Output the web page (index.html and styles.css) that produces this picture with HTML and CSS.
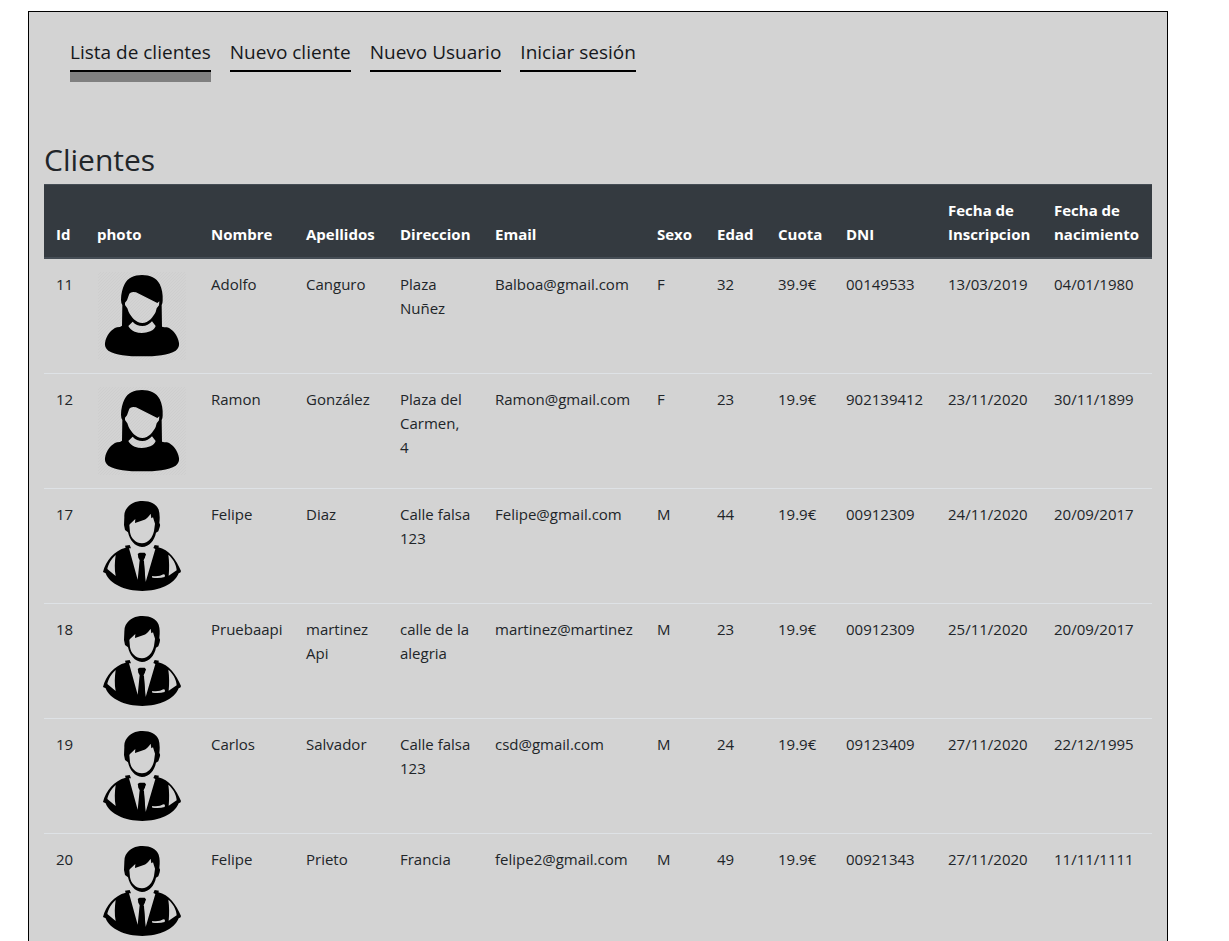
FILE: index.html
```
<!DOCTYPE html>
<html lang="es">
<head>
<meta charset="utf-8">
<title>Clientes</title>
<link rel="stylesheet" href="styles.css">
</head>
<body>
<svg class="sprite" aria-hidden="true">
  <defs>
    <pattern id="hatch" width="9" height="9" patternUnits="userSpaceOnUse">
      <path d="M-2 11L11 -2M-2 2L2 -2M7 11L11 7" stroke="#c8c8c8" stroke-width="1.5"/>
    </pattern>
  </defs>
  <symbol id="woman" viewBox="21 30 270 270">
    <rect x="24" y="30" width="264" height="264" fill="url(#hatch)"/>
    <path fill-rule="evenodd" d="M156 39C180 39 200 48 209 66C216 80 219 97 218 116Q218 123 215 129L216 194Q222 196 231 196C248 201 264 222 267 243Q269 257 257 266C236 279 198 283 156 283C114 283 76 279 55 266Q43 257 45 243C48 222 64 201 81 196Q91 196 96 191L97 129Q93 123 93 113C93 96 97 80 104 66C113 48 132 39 156 39Z
    M105 122L105 129L112 139L116 150C124 165 138 183 157 183C176 183 189 165 197 150L200 139L207 130L208 118L202 123L138 91Q124 87 118 95L111 115Z
    M115 192L128 179Q140 192 157 192Q174 192 186 178L197 192Q194 202 181 208Q157 217 134 209Q119 202 115 192Z"/>
  </symbol>
  <symbol id="man" viewBox="21 30 270 270" overflow="visible">
    <path fill-rule="evenodd" d="M107 54C119 34 137 27 158 27C181 27 200 36 206 53Q211 69 208 93Q212 97 209 106L205 118Q202 121 198 122C193 146 178 164 156 165C134 164 119 144 114 121L105 114L102 99L103 75Q102 64 107 54Z
    M118 99L120 121C123 140 138 154 156 154C175 154 188 136 192 117L195 95L189 76L184 79L182 65Q172 80 159 85L135 93L136 81L120 96Z"/>
    <path fill-rule="evenodd" d="M105 161L119 159L123 169L117 169L143 263L149 205L145 197Q143 185 149 183L164 183Q168 187 164 197L161 205L167 270L196 171L190 168L194 159L207 161L205 166C236 172 260 205 273 237Q273 242 266 244C253 277 207 297 157 297C106 297 58 276 47 244L39 240C47 207 73 175 107 167Z
    M77 189C65 199 54 218 52 231L77 252C73 233 74 209 77 189Z
    M235 188C238 208 238 231 236 251L260 235C259 215 247 198 235 188Z
    M186 252Q208 255 220 247L225 248L224 255Q208 260 187 257Z"/>
    <path d="M143 186L149 182L164 182L168 187L164 198L159 202L153 202L147 198ZM150 207L162 207L166 275L156 282L147 275Z"/>
  </symbol>
</svg>

<main class="container">
  <nav class="menu">
    <a class="menu-link active" href="#">Lista de clientes</a>
    <a class="menu-link" href="#">Nuevo cliente</a>
    <a class="menu-link" href="#">Nuevo Usuario</a>
    <a class="menu-link" href="#">Iniciar sesión</a>
  </nav>
  <h2 class="title">Clientes</h2>
  <table class="table">
    <colgroup>
      <col class="c-id"><col class="c-photo"><col class="c-name"><col class="c-surname"><col class="c-address"><col class="c-email">
      <col class="c-sex"><col class="c-age"><col class="c-fee"><col class="c-dni"><col class="c-joined"><col class="c-born">
    </colgroup>
    <thead>
      <tr><th>Id</th><th>photo</th><th>Nombre</th><th>Apellidos</th><th>Direccion</th><th>Email</th><th>Sexo</th><th>Edad</th><th>Cuota</th><th>DNI</th><th>Fecha de Inscripcion</th><th>Fecha de nacimiento</th></tr>
    </thead>
    <tbody>
      <tr><td>11</td><td><svg class="photo" role="img" aria-label="F"><use href="#woman"/></svg></td><td>Adolfo</td><td>Canguro</td><td>Plaza Nuñez</td><td>Balboa@gmail.com</td><td>F</td><td>32</td><td>39.9€</td><td>00149533</td><td>13/03/2019</td><td>04/01/1980</td></tr>
      <tr><td>12</td><td><svg class="photo" role="img" aria-label="F"><use href="#woman"/></svg></td><td>Ramon</td><td>González</td><td>Plaza del Carmen, 4</td><td>Ramon@gmail.com</td><td>F</td><td>23</td><td>19.9€</td><td>902139412</td><td>23/11/2020</td><td>30/11/1899</td></tr>
      <tr><td>17</td><td><svg class="photo" role="img" aria-label="M"><use href="#man"/></svg></td><td>Felipe</td><td>Diaz</td><td>Calle falsa 123</td><td>Felipe@gmail.com</td><td>M</td><td>44</td><td>19.9€</td><td>00912309</td><td>24/11/2020</td><td>20/09/2017</td></tr>
      <tr><td>18</td><td><svg class="photo" role="img" aria-label="M"><use href="#man"/></svg></td><td>Pruebaapi</td><td>martinez Api</td><td>calle de la alegria</td><td>martinez@martinez</td><td>M</td><td>23</td><td>19.9€</td><td>00912309</td><td>25/11/2020</td><td>20/09/2017</td></tr>
      <tr><td>19</td><td><svg class="photo" role="img" aria-label="M"><use href="#man"/></svg></td><td>Carlos</td><td>Salvador</td><td>Calle falsa 123</td><td>csd@gmail.com</td><td>M</td><td>24</td><td>19.9€</td><td>09123409</td><td>27/11/2020</td><td>22/12/1995</td></tr>
      <tr><td>20</td><td><svg class="photo" role="img" aria-label="M"><use href="#man"/></svg></td><td>Felipe</td><td>Prieto</td><td>Francia</td><td>felipe2@gmail.com</td><td>M</td><td>49</td><td>19.9€</td><td>00921343</td><td>27/11/2020</td><td>11/11/1111</td></tr>
    </tbody>
  </table>
</main>
</body>
</html>
```
FILE: styles.css
```
* {
  box-sizing: border-box;
}

body {
  margin: 0;
  background: #fff;
  color: #212529;
  font-family: "Segoe UI", "Open Sans", "Noto Sans", sans-serif;
  font-size: 15px;
  line-height: 24px;
}

.sprite {
  position: absolute;
  width: 0;
  height: 0;
}

.container {
  max-width: 1140px;
  margin: 11px 61px 0 28px;
  padding: 0 15px;
  border: 1px solid #000;
  background: #d3d3d3;
}

.menu {
  display: flex;
  align-items: flex-start;
  gap: 19px;
  padding: 25px 26px 59px;
}

.menu-link {
  padding-bottom: 3px;
  border-bottom: 2px solid #000;
  color: #16181b;
  font-size: 19px;
  line-height: 30px;
  text-decoration: none;
}

.menu-link.active {
  box-shadow: 0 10px 0 #808080;
  margin-bottom: 10px;
}

.title {
  margin: 0 0 5px;
  font-size: 30px;
  font-weight: 400;
  line-height: 38px;
}

.table {
  width: 100%;
  margin-bottom: 16px;
  border-collapse: collapse;
  table-layout: fixed;
}

.table th,
.table td {
  padding: 13px 12px 11px;
  border-top: 1px solid #dee2e6;
  text-align: left;
  vertical-align: top;
}

.table thead th {
  border-top-color: #454d55;
  border-bottom: 2px solid #454d55;
  background: #343a40;
  color: #fff;
  font-weight: 700;
  vertical-align: bottom;
}

.photo {
  display: block;
  width: 90px;
  height: 90px;
  overflow: visible;
}

.c-id { width: 41px; }
.c-photo { width: 114px; }
.c-name { width: 95px; }
.c-surname { width: 94px; }
.c-address { width: 95px; }
.c-email { width: 162px; }
.c-sex { width: 60px; }
.c-age { width: 61px; }
.c-fee { width: 68px; }
.c-dni { width: 102px; }
.c-joined { width: 106px; }
.c-born { width: 110px; }
```
